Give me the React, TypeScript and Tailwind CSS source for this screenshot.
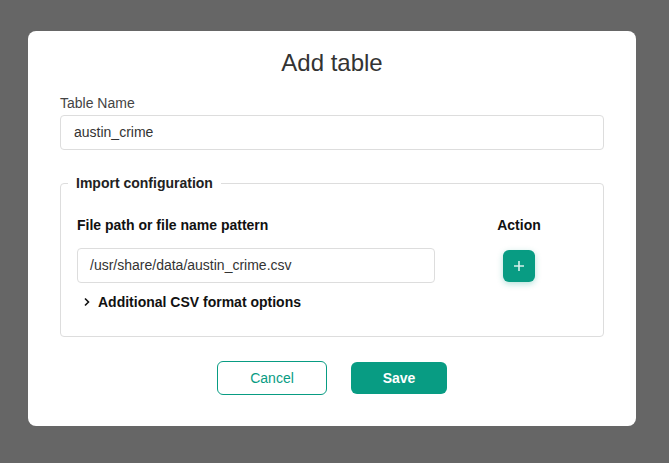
export default function App() {
  return (
    <div
      className="w-[669px] h-[463px] bg-[#666666] pt-[31px] pl-[28px]"
      style={{ fontFamily: '"Liberation Sans", Arial, sans-serif' }}
    >
      <div className="w-[608px] h-[395px] bg-white rounded-[8px] px-[32px] pt-[18px]">
        <h2 className="text-center text-[24px] leading-[28px] text-[#333333]">Add table</h2>

        <label className="block mt-[18px] text-[14px] leading-[16px] text-[#444444]">Table Name</label>
        <div className="mt-[4px] h-[35px] border border-[#dddddd] rounded-[4px] flex items-center px-[13px] text-[14px] text-[#333333]">
          austin_crime
        </div>

        <fieldset className="mt-[25px] border border-[#dddddd] rounded-[4px] pl-[16px] pb-[22px] h-[162px]">
          <legend className="px-[8px] -ml-[9px] text-[14px] leading-[16px] font-bold text-[#222222]">
            Import configuration
          </legend>
          <div className="grid grid-cols-[358px_1fr] mt-[26px]">
            <div className="text-[14px] leading-[16px] font-bold text-[#111111]">File path or file name pattern</div>
            <div className="text-center text-[14px] leading-[16px] font-bold text-[#111111]">Action</div>
            <div className="mt-[15px] h-[35px] border border-[#dddddd] rounded-[4px] flex items-center px-[12px] text-[14px] text-[#333333]">
              /usr/share/data/austin_crime.csv
            </div>
            <div className="mt-[15px] flex items-center justify-center">
              <button className="w-[32px] h-[32px] rounded-[6px] bg-[#089c83] flex items-center justify-center shadow-[0_2px_6px_rgba(8,156,131,0.3)]">
                <svg width="12" height="12" viewBox="0 0 12 12">
                  <path d="M6 1v10M1 6h10" stroke="#d8f0eb" strokeWidth="1.6" />
                </svg>
              </button>
            </div>
          </div>
          <div className="mt-[11px] flex items-center gap-[7px] pl-[6px] text-[14px] leading-[16px] font-bold text-[#111111]">
            <svg width="8" height="10" viewBox="0 0 8 10">
              <path d="M2 1.5l3.5 3.5L2 8.5" stroke="#111111" strokeWidth="1.6" fill="none" />
            </svg>
            Additional CSV format options
          </div>
        </fieldset>

        <div className="mt-[24px] flex justify-center items-center gap-[24px]">
          <button className="w-[110px] h-[34px] border border-[#089c83] rounded-[6px] text-[14px] text-[#089c83]">
            Cancel
          </button>
          <button className="w-[96px] h-[32px] bg-[#089c83] rounded-[6px] text-[14px] font-bold text-white">
            Save
          </button>
        </div>
      </div>
    </div>
  );
}
